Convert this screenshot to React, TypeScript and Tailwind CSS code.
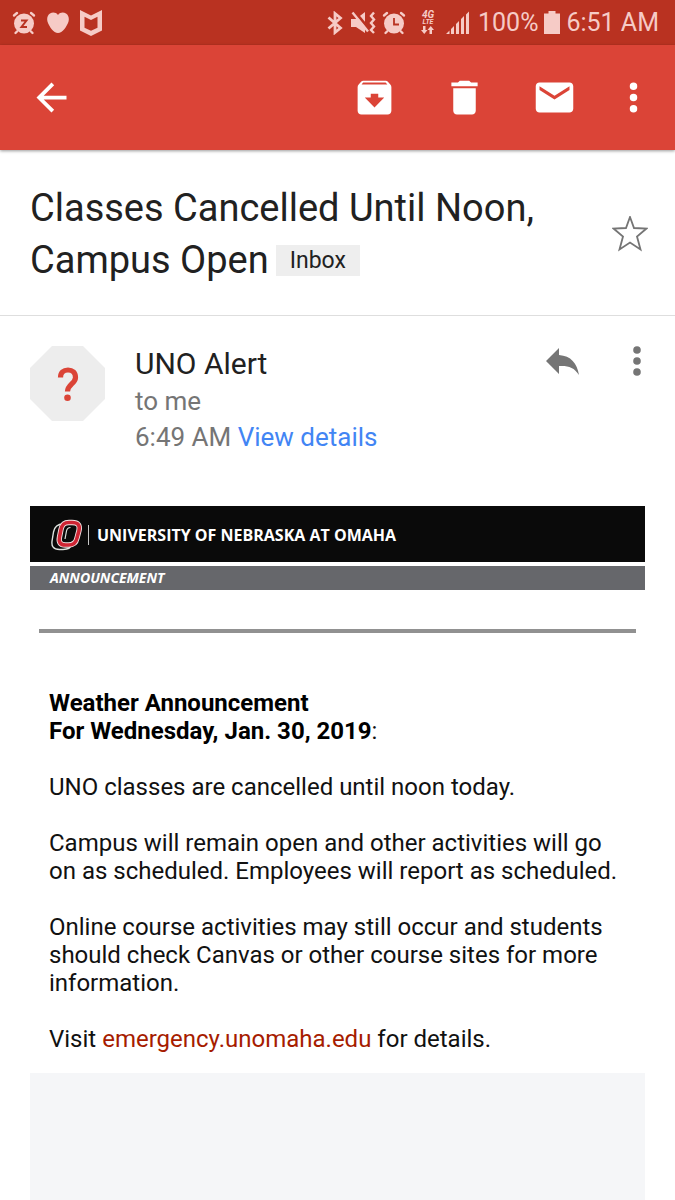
import type { ReactNode } from 'react'

type IconButtonProps = {
  label: string
  className?: string
  children: ReactNode
}

function IconButton({ label, className = '', children }: IconButtonProps) {
  return (
    <button type="button" aria-label={label} className={'shrink-0 ' + className}>
      {children}
    </button>
  )
}

function AppBarIcon({ d }: { d: string }) {
  return (
    <svg viewBox="0 0 24 24" className="size-[45px] fill-current" aria-hidden="true">
      <path d={d} />
    </svg>
  )
}

// alarm clock body shared by the snooze and the alarm status icons
function ClockBody({ children }: { children: ReactNode }) {
  return (
    <svg viewBox="0 0 24 24" className="size-6" aria-hidden="true">
      <circle cx="12" cy="12.500" r="10" fill="#f6cbc6" />
      <path d="M2 4.500L5 2M22 4.500L19 2M5 20.500l-1.500 1.500M19 20.500l1.500 1.500" stroke="#f6cbc6" strokeWidth="2.400" strokeLinecap="round" />
      {children}
    </svg>
  )
}

function StatusBar() {
  return (
    <div className="flex h-[45px] items-center justify-between bg-[#b93221] pl-3 pr-4 text-[#f6cbc6]">
      <div className="flex items-center gap-[11px]">
        <ClockBody>
          <path d="M9 9.500h5.500l-5 6.500h5.500" fill="none" stroke="#b93221" strokeWidth="2" />
        </ClockBody>
        <svg viewBox="0 0 22 22" className="size-[22px] fill-current" aria-hidden="true">
          <path d="M11 3C9 .3 5.500 0 3 1.600C.3 3.400-.4 7 .6 10C2.200 14.500 6.500 21 11 21S19.800 14.500 21.400 10C22.400 7 21.700 3.400 19 1.600C16.500 0 13 .3 11 3z" />
        </svg>
        <svg viewBox="0 0 22 26" className="h-[26px] w-[22px] fill-current" aria-hidden="true">
          <path fillRule="evenodd" d="M0 0L11 5.500L22 0V20.500L11 26L0 20.500zM4.500 6.700V17.700L11 20.800L17.500 17.700V6.700L11 10z" />
        </svg>
      </div>
      <div className="flex items-center">
        <svg viewBox="0 0 16 24" className="h-6 w-4" fill="none" stroke="currentColor" strokeWidth="2.800" aria-hidden="true">
          <path d="M1.500 6.500L13.500 17L8 21.500V2.500L13.500 7L1.500 17.500" />
        </svg>
        <svg viewBox="0 0 25 24" className="ml-2 h-6 w-[25px]" aria-hidden="true">
          <path d="M0 8H5L14 1V22L5 16H0z" fill="currentColor" />
          <path d="M3 0L18 18" stroke="#b93221" strokeWidth="3" />
          <path d="M1.500 1.500L17 20.500" stroke="currentColor" strokeWidth="2.400" />
          <path d="M23 1.500L20 5L23 8.500L20 12L23 15.500L20 19L23 22" fill="none" stroke="currentColor" strokeWidth="2.400" />
        </svg>
        <div className="ml-1.5">
          <ClockBody>
            <path d="M12 7V13.500h5" fill="none" stroke="#b93221" strokeWidth="1.800" />
          </ClockBody>
        </div>
        <div className="ml-3.5 flex w-4 flex-col items-center font-bold italic">
          <span className="text-[10px] leading-[8px]">4G</span>
          <span className="text-[7px] leading-[6px]">LTE</span>
          <svg viewBox="0 0 13 8" className="mt-px h-2 w-[13px] fill-current" aria-hidden="true">
            <path d="M2 0H4.500V4H6.500L3.250 8L0 4H2zM8.500 8H11V4H13L9.750 0L6.500 4H8.500z" />
          </svg>
        </div>
        <svg viewBox="0 0 24 24" className="ml-2.5 size-6 fill-current" aria-hidden="true">
          <path d="M0 23L3.500 19.500V23zM5 18L8 15V23H5zM10 13L13 10V23H10zM15 8L18 5V23H15zM20 3.500L23 .5V23H20z" />
        </svg>
        <span className="ml-2 text-[25px] leading-8">100%</span>
        <svg viewBox="0 0 16 24" className="ml-1.5 h-6 w-4 fill-current" aria-hidden="true">
          <path d="M4.500 0H11.500V2.500H16V23H0V2.500H4.500z" />
        </svg>
        <span className="ml-1.5 text-[25px] leading-8">6:51 AM</span>
      </div>
    </div>
  )
}

function AppBar() {
  return (
    <header className="relative flex h-[105px] items-center justify-between bg-[#db4437] pl-[29px] pr-[19px] text-white shadow-[0_1px_3px_rgba(0,0,0,0.4)]">
      <IconButton label="Back">
        <AppBarIcon d="M20 11H7.830l5.590-5.590L12 4l-8 8 8 8 1.410-1.410L7.830 13H20v-2z" />
      </IconButton>
      <div className="flex items-center gap-[45px]">
        <IconButton label="Archive">
          <AppBarIcon d="M20.540 5.230l-1.390-1.680C18.880 3.210 18.470 3 18 3H6c-.47 0-.88.21-1.160.55L3.460 5.230C3.170 5.570 3 6.020 3 6.500V19c0 1.100.9 2 2 2h14c1.100 0 2-.9 2-2V6.500c0-.48-.17-.93-.46-1.270zM12 17.300L6.800 12H10v-2h4v2h3.200L12 17.300zM5.120 5l.81-1h12l.94 1H5.120z" />
        </IconButton>
        <IconButton label="Delete">
          <AppBarIcon d="M6 19c0 1.100.9 2 2 2h8c1.100 0 2-.9 2-2V7H6v12zM19 4h-3.500l-1-1h-5l-1 1H5v2h14V4z" />
        </IconButton>
        <IconButton label="Mark as unread">
          <AppBarIcon d="M20 4H4c-1.100 0-2 .9-2 2v12c0 1.100.9 2 2 2h16c1.100 0 2-.9 2-2V6c0-1.100-.9-2-2-2zm0 4l-8 5-8-5V6l8 5 8-5v2z" />
        </IconButton>
        <IconButton label="More options" className="-ml-[11px]">
          <AppBarIcon d="M12 8a2 2 0 1 0 0-4 2 2 0 0 0 0 4zM12 14a2 2 0 1 0 0-4 2 2 0 0 0 0 4zM12 20a2 2 0 1 0 0-4 2 2 0 0 0 0 4z" />
        </IconButton>
      </div>
    </header>
  )
}

function Subject() {
  return (
    <div className="flex items-center justify-between border-b border-[#dedede] pb-[29px] pl-[30px] pr-[27px] pt-8">
      <h1 className="text-[38px] leading-[52px] text-[#212121]">
        <span className="block">Classes Cancelled Until Noon,</span>
        <span className="flex items-center gap-[7px]">
          <span>Campus Open</span>
          <span className="bg-[#eeeeee] px-3.5 text-[23px] leading-[31px]">Inbox</span>
        </span>
      </h1>
      <IconButton label="Star">
        <svg viewBox="0 0 36 36" className="size-9" fill="none" stroke="#757575" strokeWidth="1.800" aria-hidden="true">
          <path d="M18 1L22 12L34.500 12.500L25 20.500L28.500 33.500L18 26.500L7.500 33.500L11 20.500L1.500 12.500L14 12z" />
        </svg>
      </IconButton>
    </div>
  )
}

function Sender() {
  return (
    <div className="flex items-start pl-[30px] pr-[34px] pt-[30px]">
      <svg viewBox="0 0 75 75" className="size-[75px] shrink-0" aria-hidden="true">
        <path d="M22 0H53L75 22V53L53 75H22L0 53V22z" fill="#ededed" />
        <path d="M30.500 31.500C30.500 26.500 33.500 24 38 24C42.500 24 45.500 26.500 45.500 31.500C45.500 37.500 37.500 38.500 37.500 45.500" fill="none" stroke="#db4437" strokeWidth="5.200" />
        <circle cx="37.500" cy="51.700" r="3.300" fill="#db4437" />
      </svg>
      <div className="ml-[30px] grow">
        <p className="text-[30px] leading-9 text-[#212121]">UNO Alert</p>
        <p className="mt-px text-[26px] leading-9 text-[#757575]">to me</p>
        <p className="text-[26px] leading-9 text-[#757575]">
          6:49 AM <a href="#details" className="text-[#4285f4]">View details</a>
        </p>
      </div>
      <IconButton label="Reply">
        <svg viewBox="0 0 34 30" className="h-[30px] w-[34px] fill-[#757575]" aria-hidden="true">
          <path d="M0 15L13 2V9C25 10 31 17 33 29C28 21 22 19.500 13 20V28z" />
        </svg>
      </IconButton>
      <IconButton label="Message options" className="ml-[53px]">
        <svg viewBox="0 0 8 30" className="h-[30px] w-2 fill-[#757575]" aria-hidden="true">
          <circle cx="4" cy="4" r="3.800" />
          <circle cx="4" cy="15" r="3.800" />
          <circle cx="4" cy="26" r="3.800" />
        </svg>
      </IconButton>
    </div>
  )
}

function OmahaLogo() {
  return (
    <svg viewBox="0 0 32 32" className="size-8 shrink-0" fill="none" aria-hidden="true">
      <path d="M12 5C6 5 3.500 8 2.500 13L1.200 21C0 27.500 2.500 30.500 8.500 30.500H12C18 30.500 20.500 28 21.500 24" stroke="#dfe3df" strokeWidth="1.400" />
      <path d="M18 3.500H21C27.500 3.500 29 6.500 28 11.500L26 19C25 24 22.500 26 17.500 26H14.500C9 26 7.500 23 8.500 18L10 10.500C11 5.500 13 3.500 18 3.500z" stroke="#f1e4e4" strokeWidth="5.400" />
      <path d="M18 3.500H21C27.500 3.500 29 6.500 28 11.500L26 19C25 24 22.500 26 17.500 26H14.500C9 26 7.500 23 8.500 18L10 10.500C11 5.500 13 3.500 18 3.500z" stroke="#cf2534" strokeWidth="3.600" />
      <path d="M19.500 8.500C17 8.500 16 9.500 15.500 12L14 20" stroke="#dfe3df" strokeWidth="1.200" />
    </svg>
  )
}

function Banner() {
  return (
    <div className="font-['Open_Sans',sans-serif] font-bold text-white">
      <div className="flex h-14 items-center bg-[#0a0a0a] pl-[21px] pt-0.5">
        <OmahaLogo />
        <div className="ml-[5px] h-5 w-px bg-[#c8c8c8]" />
        <p className="ml-2 text-[16px] leading-6">UNIVERSITY OF NEBRASKA AT OMAHA</p>
      </div>
      <p className="mt-1 bg-[#66676b] pl-5 text-[14px] italic leading-6">ANNOUNCEMENT</p>
    </div>
  )
}

export default function App() {
  return (
    <main className="min-h-screen bg-white font-['Roboto',sans-serif]">
      <StatusBar />
      <AppBar />
      <Subject />
      <Sender />
      <article className="mx-[30px] mt-[51px]">
        <Banner />
        <hr className="mx-[9px] mt-[39px] border-t-4 border-[#919191]" />
        <div className="flex flex-col gap-7 px-[19px] pb-5 pt-14 text-[24px] leading-7 text-[#111111]">
          <p>
            <strong className="text-black">
              Weather Announcement
              <br />
              For Wednesday, Jan. 30, 2019
            </strong>
            :
          </p>
          <p>UNO classes are cancelled until noon today.</p>
          <p>Campus will remain open and other activities will go on as scheduled. Employees will report as scheduled.</p>
          <p>Online course activities may still occur and students should check Canvas or other course sites for more information.</p>
          <p>
            Visit <a href="https://emergency.unomaha.edu" className="text-[#a61c00]">emergency.unomaha.edu</a> for details.
          </p>
        </div>
        <div className="h-[127px] bg-[#f5f6f8]" />
      </article>
    </main>
  )
}
